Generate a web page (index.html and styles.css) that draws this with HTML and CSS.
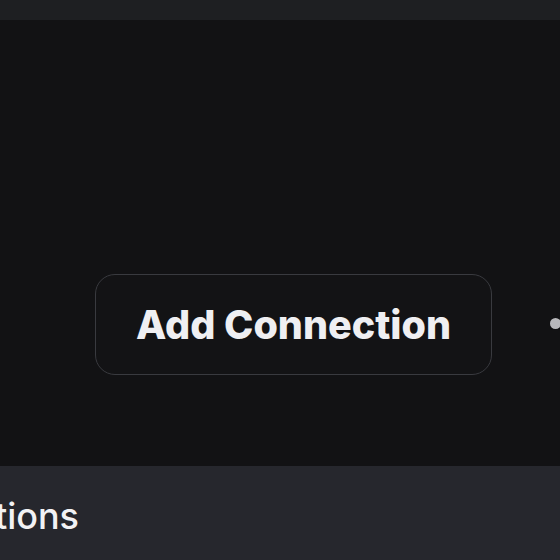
FILE: index.html
```html
<!DOCTYPE html>
<html>
<head>
<meta charset="utf-8">
<link rel="stylesheet" href="styles.css">
</head>
<body>
<div class="page">
  <div class="topbar"></div>
  <div class="main">
    <div class="row">
      <button class="btn">Add Connection</button>
      <span class="dot"></span>
    </div>
  </div>
  <div class="footer">
    <div class="title-clip"><span class="title">Connections</span></div>
  </div>
</div>
</body>
</html>
```
FILE: styles.css
```css
html, body {
  margin: 0;
  padding: 0;
  background: #121214;
}
.page {
  width: 560px;
  height: 560px;
  display: flex;
  flex-direction: column;
  overflow: hidden;
  font-family: Inter, "Noto Sans", sans-serif;
}
.topbar {
  height: 20px;
  background: #1e1f22;
  flex: none;
}
.main {
  height: 446px;
  flex: none;
  background: #121214;
  padding-top: 254px;
  box-sizing: border-box;
}
.row {
  display: flex;
  align-items: center;
  padding-left: 95px;
  gap: 58px;
}
.btn {
  width: 397px;
  height: 101px;
  box-sizing: border-box;
  border: 1.5px solid #393a3f;
  border-radius: 20px;
  background: #131315;
  color: #efeff2;
  font-family: Inter, "Noto Sans", sans-serif;
  font-weight: 800;
  font-size: 39.5px;
  padding: 0;
  flex: none;
}
.dot {
  width: 11px;
  height: 11px;
  border-radius: 50%;
  background: #b8b8bc;
  flex: none;
  margin-top: -2px;
}
.footer {
  flex: 1;
  background: #26272d;
  padding-top: 28px;
  box-sizing: border-box;
}
.title-clip {
  width: 79px;
  overflow: hidden;
  display: flex;
  justify-content: flex-end;
}
.title {
  white-space: nowrap;
  color: #f2f2f4;
  font-size: 36px;
  font-weight: 500;
  line-height: 44px;
}
```
